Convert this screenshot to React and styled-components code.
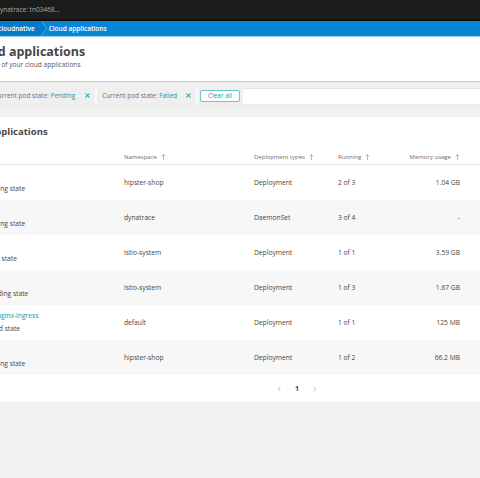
import React from "react";
import styled, { createGlobalStyle } from "styled-components";
import { X, ChevronLeft, ChevronRight } from "lucide-react";

const GlobalStyle = createGlobalStyle`
  html, body {
    margin: 0;
    padding: 0;
    background: #f2f2f2;
  }
  body {
    font-family: "Open Sans", "Noto Sans", sans-serif;
    color: #454646;
  }
`;

const teal = "#00a1b2";

// the screenshot is cropped on the left, so the page runs 60px past the edge
const Viewport = styled.div`
  width: 480px;
  height: 478px;
  overflow: hidden;
  background: #f2f2f2;
`;

const Page = styled.div`
  width: 540px;
  margin-left: -60px;
`;

const TopBar = styled.div`
  height: 19px;
  background: #1c1c1c;
  border-bottom: 2px solid #0e0e0e;
  display: flex;
  align-items: center;
  padding-left: 56px;
  font-size: 6.5px;
  color: #a9a9a9;
`;

const Breadcrumbs = styled.nav`
  height: 15px;
  background: #0786d6;
  border-bottom: 1px solid #9fd3f3;
  display: flex;
  align-items: stretch;
  font-size: 6.5px;
  font-weight: 600;
  color: #fff;
`;

const Crumb = styled.div`
  display: flex;
  align-items: center;
  padding-left: ${(p) => p.$pl}px;
  padding-right: ${(p) => p.$pr || 0}px;
  background: ${(p) => (p.$dark ? "#0679c9" : "transparent")};
`;

const Header = styled.header`
  background: #fff;
  padding: 7px 0 12px 31px;
  border-bottom: 1px solid #a9d4df;
`;

const Title = styled.h1`
  margin: 0 0 0 -1px;
  font-size: 12.5px;
  line-height: 16px;
  font-weight: 700;
  color: #454646;
`;

const Subtitle = styled.p`
  margin: 0;
  font-size: 6.6px;
  line-height: 9px;
  color: #555;
`;

const FilterBar = styled.div`
  height: 27px;
  background: #efefef;
  display: flex;
  align-items: center;
  margin-bottom: 8px;
`;

const Chip = styled.div`
  display: flex;
  align-items: center;
  align-self: stretch;
  padding-left: ${(p) => p.$pl}px;
  padding-right: 4px;
  font-size: 6.5px;
  color: #6f6f6f;
  border-right: 2px solid #fafafa;
  margin: 4px 0;
  b {
    font-weight: 400;
    color: ${teal};
  }
  svg {
    margin-left: ${(p) => p.$xGap}px;
  }
`;

const ClearAll = styled.button`
  height: 12px;
  width: 40px;
  margin: 0 3px 0 2px;
  padding: 0;
  border: 1px solid #6cc6d2;
  border-radius: 2px;
  background: #fff;
  font-family: inherit;
  font-size: 6.5px;
  color: ${teal};
`;

const FilterInput = styled.div`
  flex: 1;
  height: 15px;
  background: #fff;
  border-top: 1px solid #e2e2e2;
`;

const Card = styled.section`
  background: #fff;
  padding-top: 9px;
`;

const CardTitle = styled.h2`
  margin: 0 0 12px;
  padding-left: 20px;
  font-size: 9.5px;
  line-height: 12px;
  font-weight: 700;
  color: #454646;
`;

const Row = styled.div`
  display: grid;
  grid-template-columns: 168.5px 130px 84px 52px 70px;
  align-items: center;
  padding: 0 20px 0 15.5px;
  height: ${(p) => (p.$head ? 14 : 35)}px;
  background: ${(p) => (p.$alt ? "#f7f7f7" : "#fff")};
  border-bottom: ${(p) => (p.$head ? "1px solid #e6e6e6" : "none")};
  font-size: ${(p) => (p.$head ? 6 : 6.7)}px;
  color: ${(p) => (p.$head ? "#6d6d6d" : "#454646")};
`;

const Cell = styled.div`
  display: flex;
  align-items: center;
  justify-content: ${(p) => (p.$right ? "flex-end" : "flex-start")};
  white-space: nowrap;
`;

const NameCell = styled.div`
  display: flex;
  flex-direction: column;
  line-height: 12.5px;
  white-space: nowrap;
  a {
    color: ${teal};
    text-decoration: none;
  }
`;

const Pager = styled.div`
  height: 27px;
  display: flex;
  align-items: center;
  padding-left: 335px;
  gap: 12px;
  font-size: 7px;
  font-weight: 700;
  color: #454646;
`;

const SortArrow = () => (
  <svg width="5" height="6" viewBox="0 0 5 6" style={{ marginLeft: 4 }}>
    <path d="M2.5 6V0.6M0.6 2.4L2.5 0.5L4.4 2.4" stroke="#9a9a9a" strokeWidth="0.7" fill="none" />
  </svg>
);

const Chevron = () => (
  <svg width="7" height="15" viewBox="0 0 7 15">
    <polygon points="0,0 5.5,7.5 0,15" fill="#0679c9" />
    <polyline points="0,0 5.5,7.5 0,15" stroke="#5db3ea" strokeWidth="0.8" fill="none" />
  </svg>
);

const rows = [
  { name: "cartservice", status: "1 pod in pending state", ns: "hipster-shop", type: "Deployment", running: "2 of 3", mem: "1.04 GB" },
  { name: "oneagent", status: "1 pod in pending state", ns: "dynatrace", type: "DaemonSet", running: "3 of 4", mem: "-" },
  { name: "istio-pilot", status: "1 pod in failed state", ns: "istio-system", type: "Deployment", running: "1 of 1", mem: "3.59 GB" },
  { name: "prometheus", status: "2 pods in pending state", ns: "istio-system", type: "Deployment", running: "1 of 3", mem: "1.67 GB" },
  { name: "cloudnatives-nginx-ingress", status: "2 pods in failed state", ns: "default", type: "Deployment", running: "1 of 1", mem: "125 MB" },
  { name: "loadgenerator", status: "1 pod in pending state", ns: "hipster-shop", type: "Deployment", running: "1 of 2", mem: "66.2 MB" },
];

const App = () => {
  return (
    <Viewport>
      <GlobalStyle />
      <Page>
        <TopBar>dynatrace: tn03468...</TopBar>
        <Breadcrumbs>
          <Crumb $dark $pl={58} $pr={6}>
            cloudnative
          </Crumb>
          <Chevron />
          <Crumb $pl={1}>Cloud applications</Crumb>
        </Breadcrumbs>
        <Header>
          <Title>Cloud applications</Title>
          <Subtitle>Overview of your cloud applications</Subtitle>
        </Header>
        <FilterBar>
          <Chip $pl={53.5} $xGap={9}>
            Current pod state:&nbsp;<b>Pending</b>
            <X size={7} color={teal} strokeWidth={3.5} />
          </Chip>
          <Chip $pl={5} $xGap={8}>
            Current pod state:&nbsp;<b>Failed</b>
            <X size={7} color={teal} strokeWidth={3.5} />
          </Chip>
          <ClearAll>Clear all</ClearAll>
          <FilterInput />
        </FilterBar>
        <Card>
          <CardTitle>Cloud applications</CardTitle>
          <Row $head>
            <Cell>
              Name
              <SortArrow />
            </Cell>
            <Cell>
              Namespace
              <SortArrow />
            </Cell>
            <Cell>
              Deployment types
              <SortArrow />
            </Cell>
            <Cell>
              Running
              <SortArrow />
            </Cell>
            <Cell $right>
              Memory usage
              <SortArrow />
            </Cell>
          </Row>
          {rows.map((r, i) => (
            <Row key={r.name} $alt={i % 2 === 1}>
              <NameCell>
                <a href="#">{r.name}</a>
                <span>{r.status}</span>
              </NameCell>
              <Cell>{r.ns}</Cell>
              <Cell>{r.type}</Cell>
              <Cell>{r.running}</Cell>
              <Cell $right>{r.mem}</Cell>
            </Row>
          ))}
          <Pager>
            <ChevronLeft size={8} color="#9a9a9a" strokeWidth={2} />
            <span>1</span>
            <ChevronRight size={8} color="#9a9a9a" strokeWidth={2} />
          </Pager>
        </Card>
      </Page>
    </Viewport>
  );
};

export default App;
